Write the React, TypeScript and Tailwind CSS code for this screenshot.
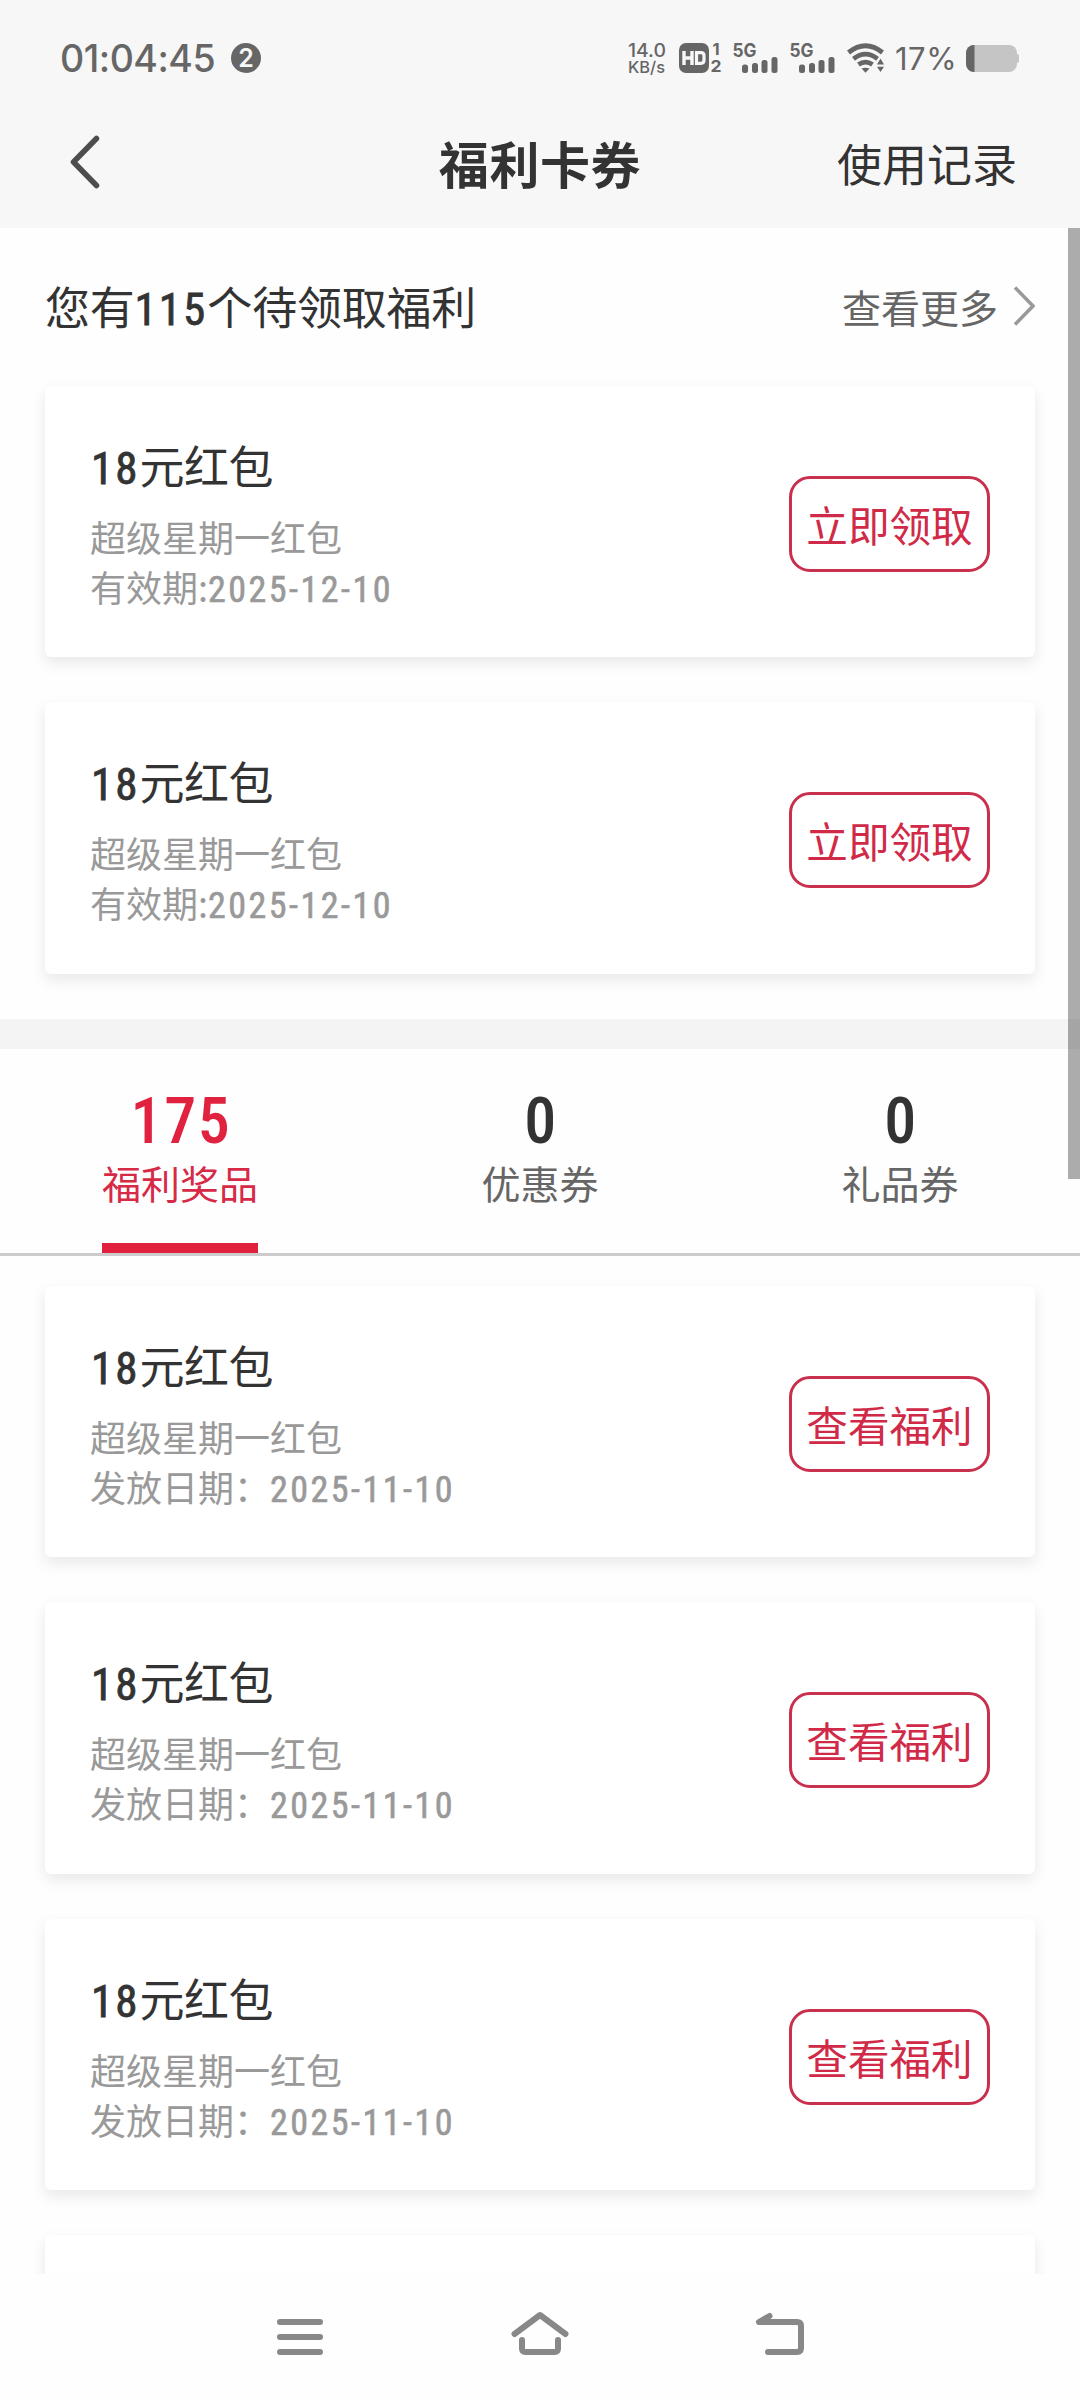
import React from "react";

const CJK = "font-['Noto_Sans_CJK_SC',sans-serif]";

/* Renders latin digit runs in a condensed face, slightly heavier and looser than the Chinese text around them. */
function Mixed({ text }: { text: string }) {
  return (
    <>
      {text.split(/([0-9-]+)/).map((part, i) =>
        /^[0-9-]+$/.test(part) ? (
          <span
            key={i}
            className={
              part.length > 4
                ? "font-['Roboto',sans-serif] font-normal font-stretch-[80%] tracking-[0.069em] [-webkit-text-stroke:0.6px_currentColor]"
                : "font-['Roboto',sans-serif] font-normal font-stretch-[80%] tracking-[0.045em] [-webkit-text-stroke:0.8px_currentColor]"
            }
          >
            {part}
          </span>
        ) : (
          part
        )
      )}
    </>
  );
}

function Signal() {
  return (
    <svg width="46" height="30" viewBox="0 0 46 30" className="shrink-0 overflow-visible" fill="#666">
      <text x="-0.5" y="13.6" fontFamily="Inter, sans-serif" fontSize="18.5" fontWeight="700" textLength="24" lengthAdjust="spacingAndGlyphs">5G</text>
      <rect x="9" y="21.5" width="6" height="8.5" rx="2.5" />
      <rect x="19" y="20" width="6" height="10" rx="2.5" />
      <rect x="28.5" y="17" width="6" height="13" rx="2.5" />
      <rect x="38.5" y="14" width="6" height="16" rx="2.5" />
    </svg>
  );
}

function StatusBar() {
  return (
    <div className="flex h-[96px] items-center pt-[20px] pl-[60px] pr-[60px] text-[#666] font-['Inter',sans-serif]">
      <span className="mt-[1px] w-[171px] whitespace-nowrap text-[37.500px] font-medium leading-none tracking-[-0.500px]">01:04:45</span>
      <span className="flex size-[30px] items-center justify-center rounded-full bg-[#666] text-[25px] font-semibold leading-[30px] text-[#f7f7f7]">2</span>
      <div className="ml-auto flex items-center">
        <svg width="39" height="30" viewBox="0 0 39 30" className="overflow-visible" fill="#666" fontFamily="Inter, sans-serif" fontWeight="500">
          <text x="0" y="13.6" fontSize="18.5" textLength="38" lengthAdjust="spacingAndGlyphs">14.0</text>
          <text x="0" y="29.5" fontSize="16.5" textLength="37" lengthAdjust="spacingAndGlyphs">KB/s</text>
        </svg>
        <svg width="43" height="30" viewBox="0 0 43 30" className="ml-[12px] overflow-visible" fill="#666" fontFamily="Inter, sans-serif" fontWeight="700">
          <rect x="0" y="0" width="30" height="30" rx="7" />
          <path d="M5 8v14M13 8v14M5 15h8" stroke="#f7f7f7" strokeWidth="3.4" fill="none" />
          <path d="M17.5 9.7h4.5q3 0 3 3v4.6q0 3-3 3h-4.5z" stroke="#f7f7f7" strokeWidth="3.2" fill="none" />
          <text x="33.5" y="11.8" fontSize="16.5">1</text>
          <text x="31.5" y="29" fontSize="16.5" textLength="11" lengthAdjust="spacingAndGlyphs">2</text>
        </svg>
        <div className="ml-[11px] flex gap-[11px]">
          <Signal />
          <Signal />
        </div>
        <svg width="38" height="30" viewBox="0 0 38 30" className="ml-[11px]" fill="none" stroke="#666" strokeWidth="4.800">
          <path d="M1.5 9.5Q18.5-4 35.500 9.500" />
          <path d="M6.500 15.800Q18.500 6.500 30.500 15.800" />
          <path d="M11.500 21.500Q18.500 16.800 25.500 21.500" />
          <path d="M14.500 25.600Q18.500 24 22.500 25.600L18.500 29.800z" fill="#666" stroke="none" />
          <path d="M33.500 15.500l3.500 6h-7zM33.500 29l3.500-5.200h-7z" fill="#666" stroke="none" />
        </svg>
        <span className="ml-[10px] w-[61px] whitespace-nowrap text-[31px] leading-[32px] pt-[1px] tracking-[0.500px]">17%</span>
        <svg width="54" height="28" viewBox="0 0 54 28" className="mt-[1px] ml-[10px]">
          <rect x="47" y="9" width="6" height="9" rx="2" fill="#c5c5c5" />
          <rect x="0" y="0" width="51" height="27" rx="8" fill="#c5c5c5" />
          <path d="M8.500 0H8a8 8 0 0 0-8 8v11a8 8 0 0 0 8 8h.5z" fill="#666" />
        </svg>
      </div>
    </div>
  );
}

function Header() {
  return (
    <div className="relative flex h-[132px] items-center justify-between pl-[68px] pr-[63px] text-[#333]">
      <svg width="34" height="56" viewBox="0 0 34 56" fill="none" stroke="#4d4d4d" strokeWidth="5.500" strokeLinecap="round" strokeLinejoin="round">
        <path d="M28.500 4.500L5.500 28l23 23.500" />
      </svg>
      <h1 className="absolute inset-x-0 text-center text-[50px] font-bold leading-[66px] tracking-[0.600px]">福利卡券</h1>
      <span className="relative mt-[2px] text-[45px] leading-[66px]">使用记录</span>
    </div>
  );
}

function Card({ sub, action }: { sub: string; action: string }) {
  return (
    <div className="flex h-[271.500px] shrink-0 items-center justify-between rounded-[6px] bg-white px-[45px] shadow-[0_6px_15px_rgba(0,0,0,0.09)]">
      <div className="-mt-[1px] flex flex-col">
        <span className="h-[68px] pl-[1px] text-[45px] leading-[67px] tracking-[-0.500px] text-[#333]"><Mixed text="18元红包" /></span>
        <span className="mt-[12px] h-[50px] text-[36px] leading-[50px] text-[#999]">超级星期一红包</span>
        <span className="h-[50px] text-[36px] leading-[50px] text-[#999]"><Mixed text={sub} /></span>
      </div>
      <button className="mt-[5px] flex h-[96px] w-[201px] items-center justify-center rounded-[21px] border-[3px] border-[#c9304d] text-[41.600px] text-[#d02a48]">
        {action}
      </button>
    </div>
  );
}

const tabs = [
  { count: "175", label: "福利奖品", active: true },
  { count: "0", label: "优惠券", active: false },
  { count: "0", label: "礼品券", active: false },
];

function Tabs() {
  return (
    <div className="flex h-[207.500px] shrink-0 border-b-[3px] border-[#ccc]">
      {tabs.map((t) => (
        <div key={t.label} className="flex flex-1 justify-center">
          <div className={t.active ? "flex flex-col items-center border-b-[10px] border-[#e0203c] text-[#e0223f]" : "flex flex-col items-center border-b-[10px] border-transparent text-[#333]"}>
            <span className="mt-[41px] h-[64px] pl-[2px] font-['Roboto',sans-serif] text-[64px] font-medium leading-[64px] font-stretch-[80%] tracking-[0.025em]">{t.count}</span>
            <span className={t.active ? "mt-[2px] text-[39px] leading-[52px] text-[#d62a47]" : "mt-[2px] text-[39px] leading-[52px] text-[#666]"}>{t.label}</span>
          </div>
        </div>
      ))}
    </div>
  );
}

function NavBar() {
  return (
    <div className="flex h-[126px] shrink-0 items-center justify-center gap-[180px] bg-[#fefefe]">
      <svg width="60" height="60" viewBox="0 0 60 60" fill="none" stroke="#888" strokeWidth="6" strokeLinecap="round">
        <path d="M10 15h40M10 30h40M10 45h40" />
      </svg>
      <svg width="60" height="60" viewBox="0 0 60 60" fill="none" stroke="#888" strokeWidth="6" strokeLinecap="round" strokeLinejoin="round">
        <path d="M4.500 27L30 8l25.500 19" />
        <path d="M12 33v8.500q0 3.500 3.500 3.500h29q3.500 0 3.500-3.500v-8.500" />
      </svg>
      <svg width="60" height="60" viewBox="0 0 60 60" fill="none" stroke="#888" strokeWidth="6" strokeLinecap="round" strokeLinejoin="round">
        <path d="M19.500 9L9 15h38q4 0 4 4v22q0 4-4 4H18" />
      </svg>
    </div>
  );
}

export default function App() {
  return (
    <div className={`relative flex h-[2400px] w-[1080px] flex-col overflow-hidden bg-[#fefefe] ${CJK}`}>
      <div className="h-[228px] shrink-0 bg-[#f7f7f7]">
        <StatusBar />
        <Header />
      </div>
      <div className="relative flex h-[2046px] flex-col overflow-hidden bg-[#fefefe]">
        <section className="flex h-[790.500px] shrink-0 flex-col gap-[45px] px-[45px]">
          <div className="flex h-[112.500px] shrink-0 items-end justify-between pb-[2px]">
            <h2 className="h-[66px] text-[45px] leading-[66px] tracking-[-0.200px] text-[#333]"><Mixed text="您有115个待领取福利" /></h2>
            <a className="flex h-[66px] items-center text-[39px] leading-[66px] text-[#666]">
              查看更多
              <svg width="22" height="42" viewBox="0 0 22 42" className="ml-[15px]" fill="none" stroke="#999" strokeWidth="3.500">
                <path d="M2 2.500L20 21 2 39.500" />
              </svg>
            </a>
          </div>
          <Card sub="有效期:2025-12-10" action="立即领取" />
          <Card sub="有效期:2025-12-10" action="立即领取" />
        </section>
        <div className="h-[30px] shrink-0 bg-[#f4f4f4]" />
        <Tabs />
        <section className="flex shrink-0 flex-col gap-[45px] px-[45px] pt-[29.500px]">
          {["a", "b", "c"].map((id) => (
            <Card key={id} sub="发放日期：2025-11-10" action="查看福利" />
          ))}
          <div className="h-[271.500px] shrink-0 rounded-[6px] bg-white shadow-[0_6px_15px_rgba(0,0,0,0.09)]" />
        </section>
        <div className="absolute right-0 top-0 h-[951px] w-[12px] bg-black/32" />
      </div>
      <NavBar />
    </div>
  );
}
